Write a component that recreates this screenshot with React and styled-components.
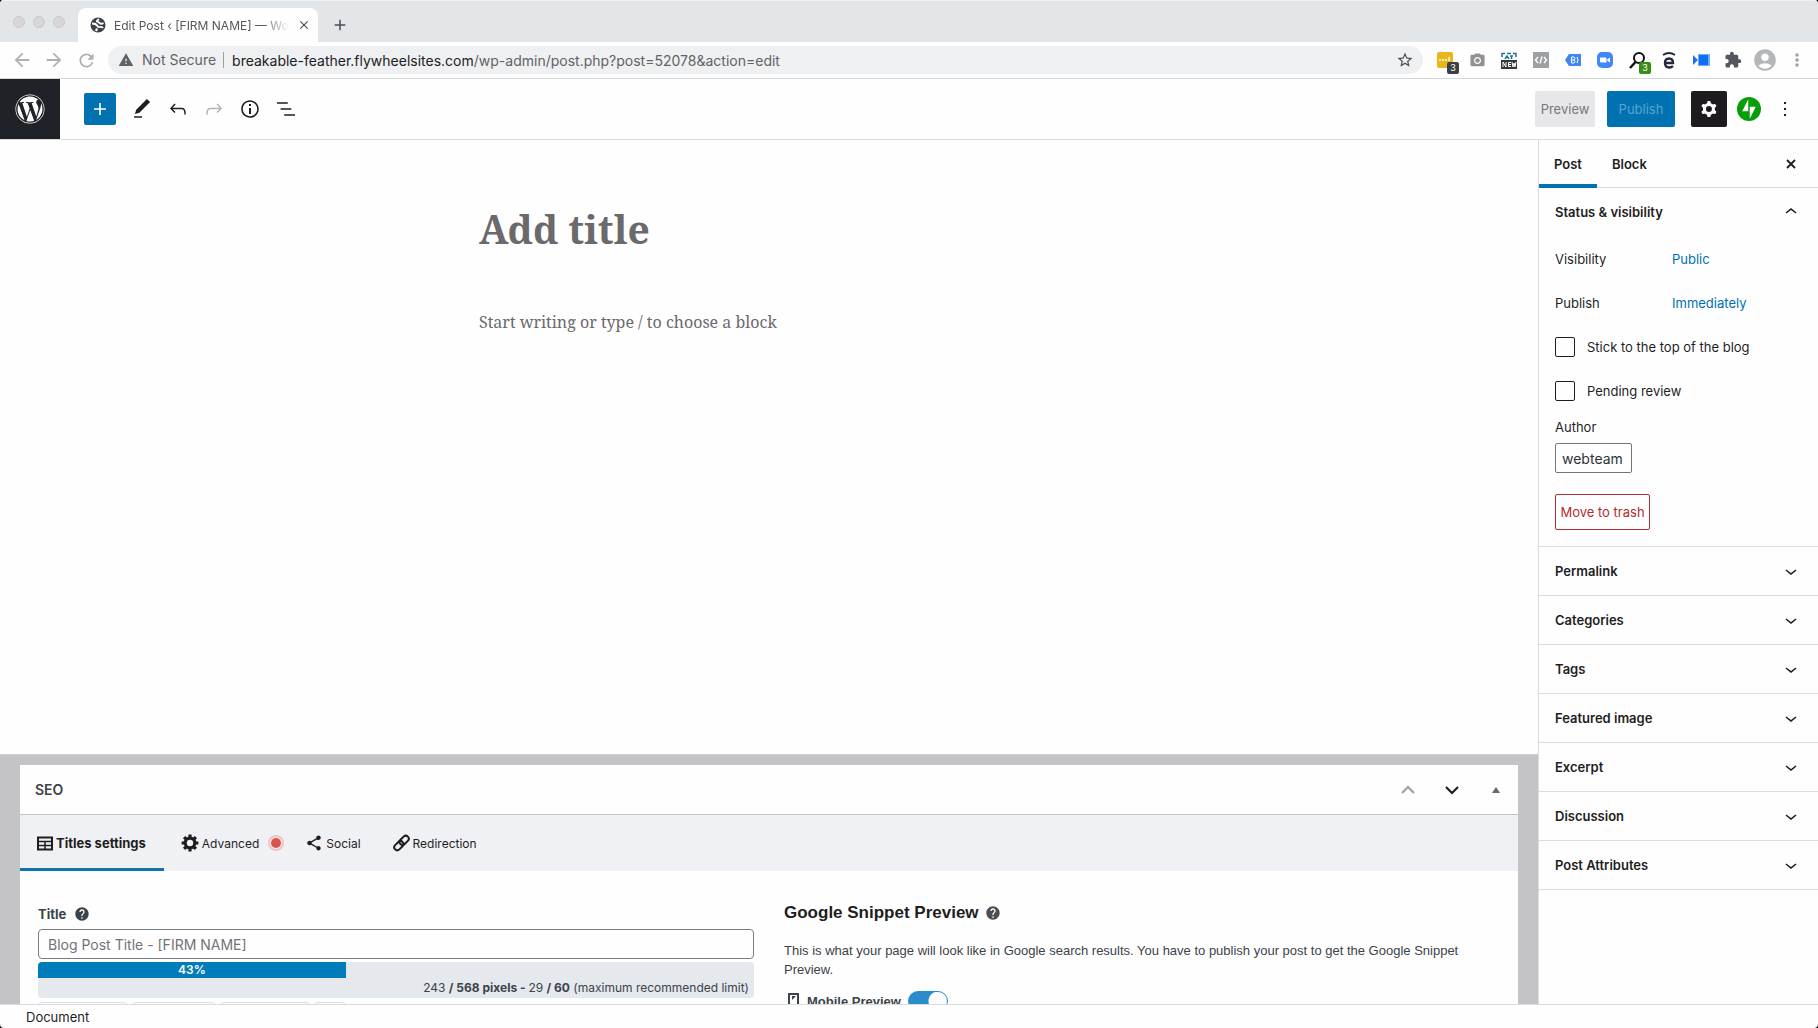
import styled, { createGlobalStyle } from "styled-components";
import {
  MdAccountCircle,
  MdAdd,
  MdArrowBack,
  MdArrowForward,
  MdClose,
  MdExtension,
  MdHelp,
  MdMoreVert,
  MdPhotoCamera,
  MdRefresh,
  MdShare,
  MdStarBorder,
  MdWarning,
} from "react-icons/md";
import { FaWordpress } from "react-icons/fa6";

const colors = {
  ink: "#1e1e1e",
  blue: "#007cba",
  deepBlue: "#0071b1",
  line: "#dcdcde",
  muted: "#5f6368",
  red: "#b32d2e",
};

const iconPaths = {
  plus: "M18 11.2h-5.2V6h-1.6v5.2H6v1.6h5.2V18h1.6v-5.2H18z",
  pencil: "M20.1 5.1L16.9 2 6.2 12.7l-1.3 4.4 4.5-1.3L20.1 5.1zM4 20.8h8v-1.5H4v1.5z",
  undo: "M18.3 11.7c-.6-.6-1.4-.9-2.3-.9H6.7l2.9-3.3-1.1-1-4.5 5L8.5 16l1-1-2.7-2.7H16c.5 0 .9.2 1.3.5 1 1 1 3.4 1 4.5v.3h1.5v-.2c0-1.5 0-4.3-1.5-5.7z",
  redo: "M15.6 6.5l-1.1 1 2.9 3.3H8c-.9 0-1.7.3-2.3.9-1.4 1.5-1.4 4.2-1.4 5.6v.2h1.5v-.3c0-1.1 0-3.5 1-4.5.3-.3.7-.5 1.3-.5h9.2L14.5 15l1.1 1.1 4.6-4.6-4.6-5z",
  info: "M12 3.2c-4.8 0-8.8 3.9-8.8 8.8 0 4.8 3.9 8.8 8.8 8.8 4.8 0 8.8-3.9 8.8-8.8 0-4.8-4-8.8-8.8-8.8zm0 16c-4 0-7.2-3.3-7.2-7.2C4.8 8 8 4.8 12 4.8s7.2 3.3 7.2 7.2c0 4-3.2 7.2-7.2 7.2zM11 17h2v-6h-2v6zm0-8h2V7h-2v2z",
  list: "M13.8 5.2H3v1.5h10.8V5.2zm-3.6 12v1.5H21v-1.5H10.2zm7.2-6H6.6v1.5h10.8v-1.5z",
  down: "M17.5 11.6L12 16l-5.5-4.4.9-1.2L12 14l4.5-3.6 1 1.2z",
  up: "M6.5 12.4L12 8l5.5 4.4-.9 1.2L12 10l-4.5 3.6-1-1.2z",
  more: "M13 19h-2v-2h2v2zm0-6h-2v-2h2v2zm0-6h-2V5h2v2z",
  gear: "M10.289 4.836A1 1 0 0111.275 4h1.306a1 1 0 01.987.836l.244 1.466c.787.26 1.503.679 2.108 1.218l1.393-.522a1 1 0 011.216.437l.653 1.13a1 1 0 01-.23 1.273l-1.148.944a6.025 6.025 0 010 2.435l1.149.946a1 1 0 01.23 1.272l-.653 1.13a1 1 0 01-1.216.437l-1.394-.522c-.605.54-1.32.958-2.108 1.218l-.244 1.466a1 1 0 01-.987.836h-1.306a1 1 0 01-.986-.836l-.244-1.466a5.995 5.995 0 01-2.108-1.218l-1.394.522a1 1 0 01-1.217-.436l-.653-1.131a1 1 0 01.23-1.272l1.149-.946a6.026 6.026 0 010-2.435l-1.148-.944a1 1 0 01-.23-1.272l.653-1.131a1 1 0 011.217-.437l1.393.522a5.994 5.994 0 012.108-1.218l.244-1.466zM14.929 12a3 3 0 11-6 0 3 3 0 016 0z",
};

const panels = ["Permalink", "Categories", "Tags", "Featured image", "Excerpt", "Discussion", "Post Attributes"];

const Icon = ({ name, size = 24 }) => (
  <svg width={size} height={size} viewBox="0 0 24 24" fill="currentColor" aria-hidden="true">
    <path fillRule="evenodd" d={iconPaths[name]} />
  </svg>
);

const CloseIcon = ({ size = 24 }) => (
  <svg width={size} height={size} viewBox="0 0 24 24" fill="none" stroke="currentColor" strokeWidth="1.8" aria-hidden="true">
    <path d="M8 8l8 8M16 8l-8 8" />
  </svg>
);

const ArrowIcon = ({ up = false }) => (
  <svg width="16" height="16" viewBox="0 0 16 16" fill="none" stroke="currentColor" strokeWidth="2.2" aria-hidden="true">
    <path d={up ? "M2 11l6-6 6 6" : "M2 5l6 6 6-6"} />
  </svg>
);

const GlobeIcon = () => (
  <svg width="16" height="16" viewBox="0 0 16 16" aria-hidden="true">
    <circle cx="8" cy="8" r="7.5" fill="#3c4145" />
    <path d="M2 6.500q4 0 5 2t3 1.500 3 1M13.500 6Q11 7.500 9.500 6T7 4.500 9 2" fill="none" stroke="#fff" strokeWidth="1.800" />
    <path d="M6 11l2 1-1 2.500-2-1z" fill="#fff" />
  </svg>
);

const TableIcon = () => (
  <svg width="16" height="16" viewBox="0 0 16 16" fill="none" stroke="currentColor" aria-hidden="true">
    <path d="M1 2.5h14v12H1z" strokeWidth="2" />
    <path d="M1 6.5h14M1 10.5h14M8 6v8" strokeWidth="1.5" />
  </svg>
);

const CogIcon = () => (
  <svg width="18" height="18" viewBox="0 0 18 18" fill="none" stroke="currentColor" aria-hidden="true">
    <circle cx="9" cy="9" r="4.8" strokeWidth="3.2" />
    {[0, 45, 90, 135].map((angle) => (
      <path key={angle} d="M9 .6v3M9 14.4v3" strokeWidth="3.2" transform={`rotate(${angle} 9 9)`} />
    ))}
  </svg>
);

const LinkIcon = () => (
  <svg width="17" height="18" viewBox="0 0 17 18" fill="none" stroke="currentColor" strokeWidth="2" aria-hidden="true">
    <g transform="rotate(-45 8.5 9)">
      <rect x="-.5" y="6" width="10.500" height="6" rx="3" />
      <rect x="7" y="6" width="10.500" height="6" rx="3" />
    </g>
  </svg>
);

const JetpackIcon = () => (
  <svg width="24" height="24" viewBox="0 0 32 32" aria-hidden="true">
    <circle cx="16" cy="16" r="16" fill="#069e08" />
    <path fill="#fff" d="M15 19H7l8-16zM17 29V13h8z" />
  </svg>
);

const extensions = [
  {
    label: "Messages",
    badge: "3",
    tone: "#3c4043",
    art: (
      <svg width="16" height="16" viewBox="0 0 16 16">
        <rect width="16" height="16" rx="2" fill="#e8b71a" />
        <path d="M2 8h2M5 8h2M8 8h2M12 5v4" stroke="#fff" strokeWidth="1.5" />
      </svg>
    ),
  },
  { label: "Screenshot", color: "#909194", art: <MdPhotoCamera size={17} /> },
  {
    label: "Alt text",
    art: (
      <svg width="16" height="17" viewBox="0 0 16 17">
        <path d="M1 5V1.500h3M6 1.500h4M12 1.500h3V5" stroke="#23708c" strokeWidth="1.500" fill="none" />
        <path d="M4 7l2-3 2 3M9 4h3M10.500 4v3" stroke="#23708c" strokeWidth="1.500" fill="none" />
        <rect y="8" width="16" height="9" fill="#33383c" />
        <path d="M2 15v-5l3 5v-5M10 10.500H7.500v4H10M7.500 12.500H10M11 10l1 5 1-4 1 4 1-5" stroke="#fff" fill="none" />
      </svg>
    ),
  },
  {
    label: "Code",
    art: (
      <svg width="16" height="16" viewBox="0 0 16 16">
        <rect width="16" height="16" fill="#9da0a5" />
        <path d="M5 5L2.500 8 5 11M11 5l2.500 3L11 11M9 4.500l-2 7" stroke="#fff" strokeWidth="1.400" fill="none" />
      </svg>
    ),
  },
  {
    label: "Tag assistant",
    art: (
      <svg width="16" height="14" viewBox="0 0 16 14">
        <path d="M0 7l4-6h12v12H4z" fill="#4285f4" />
        <path d="M6.500 4v6h2.500l1-1.500L9 7l1-1.500L9 4zM6.500 7H9M12 4q2 3 0 6" stroke="#fff" fill="none" />
      </svg>
    ),
  },
  {
    label: "Zoom",
    art: (
      <svg width="16" height="16" viewBox="0 0 16 16">
        <rect width="16" height="16" rx="5" fill="#4087fc" />
        <path d="M3 5.500h5.500q1 0 1 1v4H4q-1 0-1-1zM10.200 7.500L13 5.500v5l-2.800-2z" fill="#fff" />
      </svg>
    ),
  },
  {
    label: "Keyword search",
    badge: "3",
    tone: "#388e13",
    art: (
      <svg width="17" height="17" viewBox="0 0 17 17" fill="none" stroke="#111">
        <circle cx="10" cy="6" r="5" strokeWidth="2" />
        <path d="M6.500 10L1 16" strokeWidth="2.500" />
      </svg>
    ),
  },
  {
    label: "Ecosia",
    art: (
      <svg width="14" height="17" viewBox="0 0 14 17" fill="none" stroke="#24283a">
        <path d="M1 3q6-4 12 0" strokeWidth="1.800" />
        <path d="M3 11h8q0-4.500-4-4.500T3 11q0 4.500 4.200 4.500 2.300 0 3.800-1.500" strokeWidth="2.400" />
      </svg>
    ),
  },
  {
    label: "Video",
    art: (
      <svg width="17" height="14" viewBox="0 0 17 14">
        <path d="M0 2l5 5-5 5z" fill="#1a73e8" />
        <rect x="5" y="1" width="12" height="12" fill="#6db0f8" />
        <rect x="6" y="2" width="9" height="10" fill="#126cf0" />
      </svg>
    ),
  },
  { label: "Extensions", color: "#54575b", art: <MdExtension size={18} /> },
  { label: "Profile", color: "#b4b6b9", art: <MdAccountCircle size={26} /> },
  { label: "Browser menu", color: "#9a9da1", art: <MdMoreVert size={20} /> },
];

const Browser = () => (
  <>
    <TabStrip>
      <Lights>
        <Light />
        <Light />
        <Light />
      </Lights>
      <BrowserTab>
        <GlobeIcon />
        <TabTitle>Edit Post ‹ [FIRM NAME] — Wo</TabTitle>
        <PlainButton aria-label="Close tab">
          <MdClose size={14} />
        </PlainButton>
      </BrowserTab>
      <PlainButton aria-label="New tab">
        <MdAdd size={18} />
      </PlainButton>
    </TabStrip>
    <AddressBar>
      <NavButton aria-label="Back">
        <MdArrowBack size={22} />
      </NavButton>
      <NavButton aria-label="Forward">
        <MdArrowForward size={22} />
      </NavButton>
      <NavButton aria-label="Reload">
        <MdRefresh size={21} />
      </NavButton>
      <Omnibox>
        <MdWarning size={16} />
        <Security>Not Secure</Security>
        <Url role="textbox" aria-label="Address" tabIndex={0}>
          <strong>breakable-feather.flywheelsites.com</strong>/wp-admin/post.php?post=52078&amp;action=edit
        </Url>
        <PlainButton aria-label="Bookmark this page">
          <MdStarBorder size={18} />
        </PlainButton>
      </Omnibox>
      <Extensions>
        {extensions.map((item) => (
          <Extension key={item.label} aria-label={item.label} $color={item.color}>
            {item.art}
            {item.badge && <Badge $tone={item.tone}>{item.badge}</Badge>}
          </Extension>
        ))}
      </Extensions>
    </AddressBar>
  </>
);

const EditorHeader = () => (
  <Header>
    <Logo href="#dashboard" aria-label="View posts">
      <FaWordpress size={30} />
    </Logo>
    <Tools>
      <Tool $primary aria-label="Add block">
        <Icon name="plus" />
      </Tool>
      <Tool aria-label="Tools">
        <Icon name="pencil" />
      </Tool>
      <Tool aria-label="Undo">
        <Icon name="undo" />
      </Tool>
      <Tool aria-label="Redo" disabled>
        <Icon name="redo" />
      </Tool>
      <Tool aria-label="Details">
        <Icon name="info" />
      </Tool>
      <Tool aria-label="Outline">
        <Icon name="list" />
      </Tool>
    </Tools>
    <Actions>
      <PreviewButton>Preview</PreviewButton>
      <PublishButton>Publish</PublishButton>
      <SettingsButton aria-label="Settings">
        <Icon name="gear" />
      </SettingsButton>
      <ActionIcon aria-label="Jetpack">
        <JetpackIcon />
      </ActionIcon>
      <ActionIcon aria-label="Options">
        <Icon name="more" />
      </ActionIcon>
    </Actions>
  </Header>
);

const SeoBox = () => (
  <MetaArea>
    <MetaBox>
      <MetaHeader>
        <MetaTitle>SEO</MetaTitle>
        <MetaButton aria-label="Move up" $faded>
          <ArrowIcon up />
        </MetaButton>
        <MetaButton aria-label="Move down">
          <ArrowIcon />
        </MetaButton>
        <MetaButton aria-label="Toggle panel">
          <svg width="8" height="6" viewBox="0 0 8 6" fill="#646970">
            <path d="M4 0l4 6H0z" />
          </svg>
        </MetaButton>
      </MetaHeader>
      <MetaTabs>
        <MetaTab $active>
          <TableIcon />
          Titles settings
        </MetaTab>
        <MetaTab>
          <CogIcon />
          Advanced
          <Dot />
        </MetaTab>
        <MetaTab>
          <MdShare size={18} />
          Social
        </MetaTab>
        <MetaTab>
          <LinkIcon />
          Redirection
        </MetaTab>
      </MetaTabs>
      <MetaBody>
        <div>
          <FieldLabel htmlFor="seo-title">
            Title
            <MdHelp size={16} />
          </FieldLabel>
          <TitleField id="seo-title" placeholder="Blog Post Title - [FIRM NAME]" />
          <Meter>
            <MeterFill style={{ width: "43%" }}>43%</MeterFill>
            <MeterText>
              243 <b>/ 568 pixels - </b>29 <b>/ 60</b> (maximum recommended limit)
            </MeterText>
          </Meter>
          <TagList>
            <TagButton $width={90} aria-label="Post title tag" />
            <TagButton $width={84} aria-label="Site title tag" />
            <TagButton $width={90} aria-label="Separator tag" />
            <TagButton $width={32} aria-label="More tags" />
          </TagList>
        </div>
        <Snippet>
          <SnippetTitle>
            Google Snippet Preview
            <MdHelp size={16} />
          </SnippetTitle>
          <SnippetText>
            This is what your page will look like in Google search results. You have to publish your post to get the
            Google Snippet Preview.
          </SnippetText>
          <MobileLabel htmlFor="mobile-preview">
            <svg width="20" height="20" viewBox="0 0 20 20" fill="none" stroke="#3c434a" strokeWidth="2">
              <path d="M5 3h9v15H5z" />
              <path d="M8 5h4L8 9z" fill="#3c434a" stroke="none" />
            </svg>
            Mobile Preview
            <Switch type="checkbox" id="mobile-preview" defaultChecked />
          </MobileLabel>
        </Snippet>
      </MetaBody>
    </MetaBox>
  </MetaArea>
);

const Sidebar = () => (
  <Aside>
    <SideTabs>
      <SideTab $active>Post</SideTab>
      <SideTab>Block</SideTab>
      <SideClose aria-label="Close settings">
        <CloseIcon size={24} />
      </SideClose>
    </SideTabs>
    <Panel>
      <PanelToggle aria-expanded="true">
        Status &amp; visibility
        <Icon name="up" />
      </PanelToggle>
      <PanelBody>
        <Row>
          <RowLabel>Visibility</RowLabel>
          <LinkButton>Public</LinkButton>
        </Row>
        <Row>
          <RowLabel>Publish</RowLabel>
          <LinkButton>Immediately</LinkButton>
        </Row>
        <Row>
          <Check type="checkbox" id="sticky" />
          <label htmlFor="sticky">Stick to the top of the blog</label>
        </Row>
        <Row>
          <Check type="checkbox" id="pending" />
          <label htmlFor="pending">Pending review</label>
        </Row>
        <AuthorLabel htmlFor="author">Author</AuthorLabel>
        <AuthorSelect id="author">
          <option>webteam</option>
        </AuthorSelect>
        <TrashButton>Move to trash</TrashButton>
      </PanelBody>
    </Panel>
    {panels.map((title) => (
      <Panel key={title}>
        <PanelToggle aria-expanded="false">
          {title}
          <Icon name="down" />
        </PanelToggle>
      </Panel>
    ))}
  </Aside>
);

const App = () => (
  <Window>
    <GlobalStyle />
    <Browser />
    <EditorHeader />
    <Workspace>
      <Main>
        <Canvas>
          <PostTitle aria-label="Add title" placeholder="Add title" />
          <PostText aria-label="Add block" placeholder="Start writing or type / to choose a block" />
        </Canvas>
        <SeoBox />
      </Main>
      <Sidebar />
    </Workspace>
    <Footer>Document</Footer>
  </Window>
);

export default App;

const GlobalStyle = createGlobalStyle`
  * {
    box-sizing: border-box;
  }
  body {
    margin: 0;
    background: #000;
    color: ${colors.ink};
    font-family: Inter, "Liberation Sans", sans-serif;
    font-size: 12px;
  }
  button, input, select {
    font: inherit;
    color: inherit;
  }
  svg {
    flex-shrink: 0;
  }
`;

const Window = styled.div`
  display: flex;
  flex-direction: column;
  height: 100vh;
  overflow: hidden;
  border-radius: 4px;
  background: #fefefe;
`;

const PlainButton = styled.button`
  display: flex;
  align-items: center;
  justify-content: center;
  padding: 0;
  border: 0;
  background: none;
  color: #4a4d51;
`;

const TabStrip = styled.div`
  display: flex;
  align-items: flex-end;
  height: 42px;
  flex-shrink: 0;
  padding-left: 13px;
  border-top: 1px solid #eff2f4;
  background: #e2e6e9;

  > button {
    height: 34px;
    margin-left: 13px;
  }
`;

const Lights = styled.div`
  display: flex;
  align-items: center;
  gap: 8px;
  height: 41px;
  margin-right: 13px;
`;

const Light = styled.span`
  width: 12px;
  height: 12px;
  border: 1px solid #cbc8ca;
  border-radius: 50%;
  background: #d8d6d8;
`;

const BrowserTab = styled.div`
  display: flex;
  align-items: center;
  gap: 8px;
  width: 240px;
  height: 34px;
  padding: 0 9px 0 12px;
  border-radius: 8px 8px 0 0;
  background: #fefefe;
`;

const TabTitle = styled.span`
  flex: 1;
  white-space: nowrap;
  color: #54575b;
  mask-image: linear-gradient(to right, #000 85%, transparent);
`;

const AddressBar = styled.div`
  display: flex;
  align-items: center;
  height: 37px;
  flex-shrink: 0;
  padding: 0 5px 0 6px;
  border-bottom: 1px solid #d6d7d9;
`;

const NavButton = styled(PlainButton)`
  width: 32px;
  color: #aeb1b4;
`;

const Omnibox = styled.div`
  display: flex;
  align-items: center;
  flex: 1;
  height: 28px;
  margin: 0 6px;
  padding: 0 9px 0 10px;
  border-radius: 14px;
  background: #eff0f2;
  color: ${colors.muted};
  font-size: 14px;
`;

const Security = styled.span`
  margin: 0 8px;
  padding-right: 7px;
  border-right: 1px solid #9a9da1;
  line-height: 16px;
`;

const Url = styled.div`
  flex: 1;
  overflow: hidden;
  white-space: nowrap;

  strong {
    font-weight: 400;
    color: #202124;
  }
`;

const Extensions = styled.div`
  display: flex;
`;

const Extension = styled(PlainButton)`
  position: relative;
  width: 32px;
  height: 28px;
  color: ${(props) => props.$color || "#202124"};
`;

const Badge = styled.span`
  position: absolute;
  right: 2px;
  bottom: 0;
  width: 12px;
  border-radius: 2px;
  background: ${(props) => props.$tone};
  color: #fff;
  font-size: 9px;
  line-height: 12px;
`;

const Header = styled.header`
  display: flex;
  align-items: center;
  height: 61px;
  flex-shrink: 0;
  border-bottom: 1px solid ${colors.line};
`;

const Logo = styled.a`
  display: flex;
  align-items: center;
  justify-content: center;
  width: 60px;
  height: 60px;
  background: #1f2327;
  color: #fff;
`;

const Tools = styled.div`
  display: flex;
  flex: 1;
  gap: 4px;
  padding-left: 24px;
`;

const Tool = styled(PlainButton)`
  width: 32px;
  height: 32px;
  margin-right: ${(props) => (props.$primary ? "6px" : "0")};
  border-radius: 2px;
  background: ${(props) => (props.$primary ? colors.deepBlue : "none")};
  color: ${(props) => (props.$primary ? "#fff" : colors.ink)};

  &:disabled {
    color: #b5b5b6;
  }
`;

const Actions = styled.div`
  display: flex;
  align-items: center;
  padding-right: 15px;
`;

const PreviewButton = styled(PlainButton)`
  width: 60px;
  height: 36px;
  border-radius: 2px;
  background: #e7e7e9;
  color: #77787a;
  font-size: 13px;
`;

const PublishButton = styled(PreviewButton)`
  width: 68px;
  margin: 0 16px 0 12px;
  background: ${colors.deepBlue};
  color: #5ba5d0;
`;

const SettingsButton = styled(PreviewButton)`
  width: 36px;
  margin-right: 4px;
  background: #1d1b1e;
  color: #fff;
`;

const ActionIcon = styled(PlainButton)`
  width: 36px;
  height: 36px;
  color: ${colors.ink};
`;

const Workspace = styled.div`
  display: flex;
  flex: 1;
  min-height: 0;
`;

const Main = styled.main`
  flex: 1;
  min-width: 0;
  overflow: hidden;
`;

const Canvas = styled.section`
  display: flex;
  flex-direction: column;
  gap: 43px;
  max-width: 580px;
  margin: 0 auto;
  padding: 58px 0 40vh;
  font-family: "Noto Serif", "Droid Serif", "DejaVu Serif", serif;
`;

const PostTitle = styled.input`
  height: 60px;
  padding: 0;
  border: 0;
  outline: 0;
  background: none;
  font-size: 39px;
  font-weight: 700;

  &::placeholder {
    color: #6b696c;
    opacity: 1;
  }
`;

const PostText = styled(PostTitle)`
  height: 42px;
  font-size: 16px;
  font-weight: 400;
`;

const MetaArea = styled.section`
  padding: 10px 20px 0;
  border-top: 1px solid #d2d2d4;
  background: #c4c4c6;
`;

const MetaBox = styled.div`
  background: #fefefe;
`;

const MetaHeader = styled.div`
  display: flex;
  align-items: center;
  height: 50px;
  border-bottom: 1px solid #c3c4c7;
`;

const MetaTitle = styled.h2`
  flex: 1;
  margin: 0;
  padding-left: 15px;
  color: #3c434a;
  font-size: 14px;
  font-weight: 600;
`;

const MetaButton = styled(PlainButton)`
  width: 44px;
  height: 44px;
  color: ${(props) => (props.$faded ? "#a0a2a5" : colors.ink)};
`;

const MetaTabs = styled.div`
  display: flex;
  height: 56px;
  background: #f0f1f4;
`;

const MetaTab = styled(PlainButton)`
  gap: 3px;
  padding: 0 ${(props) => (props.$active ? "18px" : "15px")} 0 17px;
  border-top: 3px solid transparent;
  border-bottom: 3px solid ${(props) => (props.$active ? "#0f76a5" : "transparent")};
  color: ${colors.ink};
  font-size: ${(props) => (props.$active ? "13px" : "12px")};
  font-weight: ${(props) => (props.$active ? 700 : 400)};
`;

const Dot = styled.span`
  width: 10px;
  height: 10px;
  margin: 0 -8px 0 9px;
  border-radius: 50%;
  background: #d9534c;
  box-shadow: 0 0 0 1px #f0f1f4, 0 0 0 3px #f1c3c3;
`;

const MetaBody = styled.div`
  display: grid;
  grid-template-columns: 1fr 1fr;
  gap: 30px;
  padding: 32px 18px;
`;

const FieldLabel = styled.label`
  display: flex;
  align-items: center;
  gap: 8px;
  height: 22px;
  margin-bottom: 4px;
  color: #3c434a;
  font-size: 13px;
  font-weight: 700;
`;

const TitleField = styled.input`
  display: block;
  width: 100%;
  height: 30px;
  padding: 0 9px;
  border: 1px solid #787c82;
  border-radius: 4px;
  background: #fefefe;
  font-size: 14px;

  &::placeholder {
    color: #707377;
    opacity: 1;
  }
`;

const Meter = styled.div`
  height: 36px;
  margin-top: 3px;
  overflow: hidden;
  border-radius: 4px;
  background: #e5e8ed;
  color: #3c434a;
`;

const MeterFill = styled.div`
  background: ${colors.blue};
  color: #fff;
  font-weight: 600;
  line-height: 16px;
  text-align: center;
`;

const MeterText = styled.div`
  padding-right: 5px;
  line-height: 20px;
  text-align: right;
`;

const TagList = styled.div`
  display: flex;
  gap: 4px;
  margin-top: 4px;
`;

const TagButton = styled.button`
  width: ${(props) => props.$width}px;
  height: 28px;
  border: 1px solid #dcdcde;
  border-radius: 4px;
  background: #fefefe;
`;

const Snippet = styled.div`
  color: #3c434a;
  font-family: "Liberation Sans", Arial, sans-serif;
  font-size: 13px;
`;

const SnippetTitle = styled.h3`
  display: flex;
  align-items: center;
  gap: 6px;
  height: 20px;
  margin: 0;
  color: ${colors.ink};
  font-size: 17px;

  svg {
    color: #4b4f54;
  }
`;

const SnippetText = styled.p`
  margin: 18px 0 12px;
  line-height: 19px;
`;

const MobileLabel = styled.label`
  display: flex;
  align-items: center;
  font-weight: 700;

  svg {
    margin-right: 3px;
  }
`;

const Switch = styled.input`
  width: 40px;
  height: 20px;
  margin: 0 0 0 7px;
  border: 1px solid #2b8ccb;
  border-radius: 10px;
  appearance: none;
  background: radial-gradient(circle at 29px 9px, #fefefe 9px, #2b8ccb 10px);
`;

const Aside = styled.aside`
  width: 280px;
  flex-shrink: 0;
  border-left: 1px solid ${colors.line};
  font-size: 13px;
`;

const SideTabs = styled.div`
  display: flex;
  height: 48px;
  border-bottom: 1px solid ${colors.line};
`;

const SideTab = styled(PlainButton)`
  height: 48px;
  padding: 0 15px;
  border-bottom: 4px solid ${(props) => (props.$active ? colors.deepBlue : "transparent")};
  border-top: 4px solid transparent;
  color: ${colors.ink};
  font-weight: 600;
`;

const SideClose = styled(PlainButton)`
  width: 24px;
  margin: 0 15px 0 auto;
  color: ${colors.ink};
`;

const Panel = styled.section`
  border-bottom: 1px solid ${colors.line};
`;

const PanelToggle = styled(PlainButton)`
  justify-content: space-between;
  width: 100%;
  height: 48px;
  padding: 0 15px 0 16px;
  color: ${colors.ink};
  font-weight: 600;
`;

const PanelBody = styled.div`
  padding: 1px 16px 16px;
`;

const Row = styled.div`
  display: flex;
  align-items: center;
  height: 44px;
`;

const RowLabel = styled.span`
  width: 117px;
`;

const LinkButton = styled(PlainButton)`
  color: ${colors.deepBlue};
`;

const Check = styled.input`
  width: 20px;
  height: 20px;
  margin: 0 12px 0 0;
  border: 1px solid ${colors.ink};
  border-radius: 2px;
  appearance: none;
`;

const AuthorLabel = styled.label`
  display: block;
  margin: 4px 0 6px;
  line-height: 20px;
`;

const AuthorSelect = styled.select`
  display: block;
  width: 77px;
  height: 30px;
  padding: 0 6px;
  border: 1px solid #757575;
  border-radius: 2px;
  appearance: none;
  background: #fefefe;
  color: #2c3338;
  font-size: 14px;
`;

const TrashButton = styled(PlainButton)`
  width: 95px;
  height: 36px;
  margin-top: 21px;
  border: 1px solid ${colors.red};
  border-radius: 2px;
  color: ${colors.red};
  white-space: nowrap;
`;

const Footer = styled.footer`
  height: 24px;
  flex-shrink: 0;
  padding-left: 26px;
  border-top: 1px solid ${colors.line};
  font-size: 13px;
  line-height: 25px;
`;
